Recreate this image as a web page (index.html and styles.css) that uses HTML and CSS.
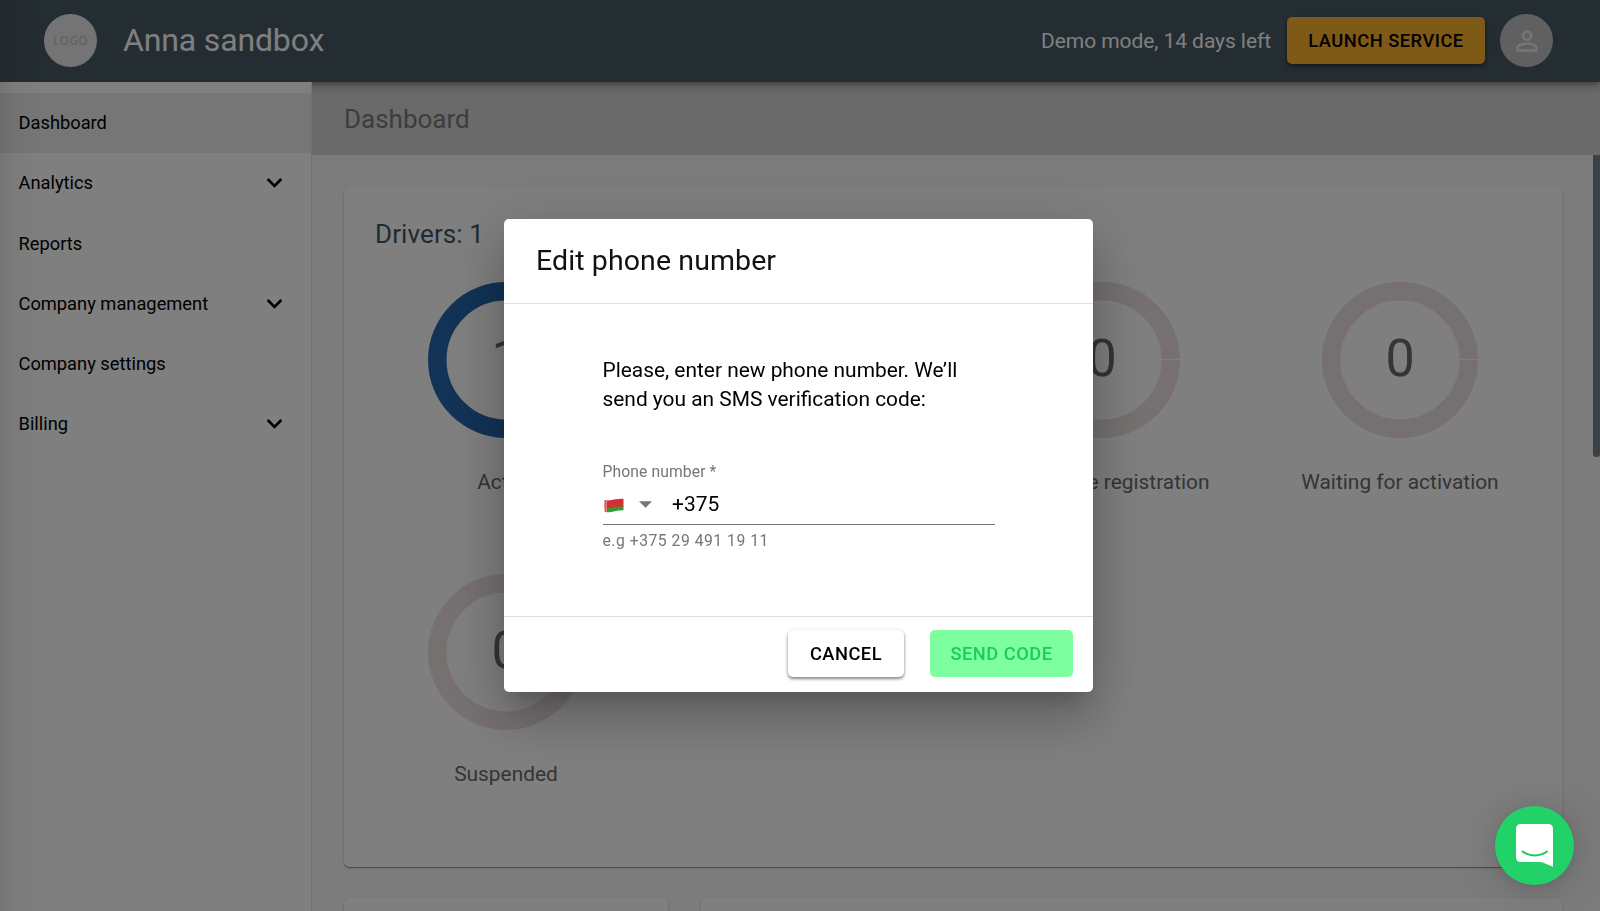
FILE: index.html
```html
<!DOCTYPE html>
<html lang="en">
<head>
    <meta charset="UTF-8">
    <meta name="viewport" content="width=device-width, initial-scale=1.0">
    <title>Anna sandbox - Dashboard</title>
    <link rel="stylesheet" href="styles.css">
</head>
<body>

    <div class="app">
        <header class="topbar">
            <div class="logo">LOGO</div>
            <h1>Anna sandbox</h1>
            <span class="demo-text">Demo mode, 14 days left</span>
            <button type="button" class="btn btn-launch">Launch service</button>
            <div class="avatar">
                <svg viewBox="0 0 24 24" width="32" height="32"><path d="M12 5.9a2.1 2.1 0 1 1 0 4.2 2.1 2.1 0 0 1 0-4.2m0 9c2.97 0 6.1 1.46 6.1 2.1v1.1H5.9V17c0-.64 3.13-2.1 6.1-2.1M12 4C9.79 4 8 5.79 8 8s1.79 4 4 4 4-1.79 4-4-1.79-4-4-4zm0 9c-2.67 0-8 1.34-8 4v3h16v-3c0-2.66-5.33-4-8-4z"/></svg>
            </div>
        </header>

        <div class="body-row">
            <nav class="sidebar">
                <a class="nav-item active">Dashboard</a>
                <a class="nav-item">Analytics
                    <svg class="chevron" viewBox="0 0 24 24"><path d="M7.41 8.59 12 13.17l4.59-4.58L18 10l-6 6-6-6z"/></svg>
                </a>
                <a class="nav-item">Reports</a>
                <a class="nav-item">Company management
                    <svg class="chevron" viewBox="0 0 24 24"><path d="M7.41 8.59 12 13.17l4.59-4.58L18 10l-6 6-6-6z"/></svg>
                </a>
                <a class="nav-item">Company settings</a>
                <a class="nav-item">Billing
                    <svg class="chevron" viewBox="0 0 24 24"><path d="M7.41 8.59 12 13.17l4.59-4.58L18 10l-6 6-6-6z"/></svg>
                </a>
            </nav>

            <main class="main">
                <div class="page-title">Dashboard</div>
                <div class="content">
                    <div class="cards">
                        <section class="card drivers">
                            <h2>Drivers: 1</h2>
                            <div class="charts">
                                <div class="chart">
                                    <div class="donut donut-blue">
                                        <svg viewBox="0 0 156 156"><circle cx="78" cy="78" r="68.7"/></svg>
                                        <span>1</span>
                                    </div>
                                    <p>Active</p>
                                </div>
                                <div class="chart">
                                    <div class="donut">
                                        <svg viewBox="0 0 156 156"><circle cx="78" cy="78" r="68.7"/></svg>
                                    </div>
                                </div>
                                <div class="chart">
                                    <div class="donut">
                                        <svg viewBox="0 0 156 156"><circle cx="78" cy="78" r="68.7"/><path d="M137 77.5h19"/></svg>
                                        <span>0</span>
                                    </div>
                                    <p>Incomplete registration</p>
                                </div>
                                <div class="chart">
                                    <div class="donut">
                                        <svg viewBox="0 0 156 156"><circle cx="78" cy="78" r="68.7"/><path d="M137 77.5h19"/></svg>
                                        <span>0</span>
                                    </div>
                                    <p>Waiting for activation</p>
                                </div>
                                <div class="chart">
                                    <div class="donut">
                                        <svg viewBox="0 0 156 156"><circle cx="78" cy="78" r="68.7"/><path d="M137 77.5h19"/></svg>
                                        <span>0</span>
                                    </div>
                                    <p>Suspended</p>
                                </div>
                            </div>
                        </section>
                        <div class="card-row">
                            <section class="card card-small"></section>
                            <section class="card card-wide"></section>
                        </div>
                    </div>
                    <div class="scrollbar"></div>
                </div>
            </main>
        </div>
    </div>

    <!-- Edit phone dialog -->
    <div class="overlay">
        <form class="modal">
            <div class="modal-header">Edit phone number</div>
            <div class="modal-body">
                <p class="modal-text">Please, enter new phone number. We’ll send you an SMS verification code:</p>
                <label for="phone">Phone number *</label>
                <div class="phone-row">
                    <svg class="flag" viewBox="0 0 20 15">
                        <path fill="#d22f36" d="M.5 2.2C6 3.4 12 .2 19.5 .8V9C12 8.6 7 11.5 .5 10.6z"/>
                        <path fill="#2f9e33" d="M3 9.8C8 10.5 13 8 19.5 8.6V12.4C13 12 7 15 3 14.2z"/>
                        <path fill="#e58a85" d="M.5 2.2 3 2.5V14.2L.5 13.9z"/>
                        <path stroke="#c4373b" stroke-width="1" stroke-dasharray="1.5 1" d="M1.7 2.5V14"/>
                    </svg>
                    <svg class="caret" viewBox="0 0 12 6"><path d="M0 0h12L6 6z"/></svg>
                    <input type="text" id="phone" value="+375">
                </div>
                <div class="helper">e.g +375 29 491 19 11</div>
            </div>
            <div class="modal-footer">
                <button type="button" class="btn btn-cancel">Cancel</button>
                <button type="button" class="btn btn-send">Send code</button>
            </div>
        </form>
    </div>

    <!-- Chat launcher -->
    <div class="chat">
        <svg viewBox="0 0 37 43" width="37" height="43">
            <path fill="#fff" d="M4.5 0h28A4.5 4.5 0 0 1 37 4.5V42.7L25.5 38H4.5A4.5 4.5 0 0 1 0 33.5v-29A4.5 4.5 0 0 1 4.5 0z"/>
            <path fill="none" stroke="#12cb5c" stroke-width="2" stroke-linecap="round" d="M6.5 27.5c7 5.2 17.5 5.2 24.5 0"/>
        </svg>
    </div>

</body>
</html>
```

FILE: styles.css
```css
* {
    box-sizing: border-box;
}

body {
    font-family: Roboto, sans-serif;
    margin: 0;
    height: 911px;
    overflow: hidden;
    background: #fff;
}

h1, h2, p {
    margin: 0;
    font-weight: 400;
}

.app {
    height: 911px;
    display: flex;
    flex-direction: column;
}

/* Top bar */
.topbar {
    height: 82px;
    flex-shrink: 0;
    display: flex;
    align-items: center;
    padding: 0 47px 1px 44px;
    background: #485a64;
    color: #fff;
    box-shadow: 0 3px 5px -1px rgba(0, 0, 0, 0.2), 0 5px 7px rgba(0, 0, 0, 0.14), 0 1px 13px rgba(0, 0, 0, 0.12);
    position: relative;
    z-index: 1;
}

.logo {
    width: 53px;
    height: 53px;
    border-radius: 50%;
    background: #e8e8e8;
    color: #c6c6c6;
    font-family: "Open Sans", sans-serif;
    font-size: 12px;
    font-weight: 600;
    letter-spacing: 0.2px;
    line-height: 53px;
    text-align: center;
}

.topbar h1 {
    margin-left: 26px;
    padding-bottom: 2px;
    font-size: 32px;
    letter-spacing: -0.15px;
}

.demo-text {
    margin-left: auto;
    margin-right: 16px;
    font-size: 21px;
    letter-spacing: -0.07px;
}

.btn {
    height: 47px;
    border: none;
    border-radius: 5px;
    padding: 0;
    font-family: inherit;
    font-size: 18.3px;
    font-weight: 500;
    letter-spacing: 0.5px;
    text-transform: uppercase;
}

.btn-launch {
    width: 198px;
    background: #ffb32c;
    color: #000;
    box-shadow: 0 2px 4px rgba(0, 0, 0, 0.45);
}

.avatar {
    width: 53px;
    height: 53px;
    margin-left: 15px;
    border-radius: 50%;
    background: #c1c1c1;
    display: flex;
    align-items: center;
    justify-content: center;
}

.avatar svg {
    fill: #ececec;
}

/* Sidebar */
.body-row {
    flex: 1;
    min-height: 0;
    display: flex;
}

.sidebar {
    width: 312px;
    flex-shrink: 0;
    padding-top: 11px;
    background: #fff;
    border-right: 1px solid #e4e4e4;
    position: relative;
    z-index: 2;
}

.nav-item {
    height: 60.2px;
    display: flex;
    align-items: center;
    justify-content: space-between;
    padding: 0 21px 0.6px 18.5px;
    font-size: 18.3px;
    color: #000;
}

.nav-item.active {
    background: #ececec;
}

.chevron {
    width: 31px;
    height: 31px;
}

/* Main area */
.main {
    flex: 1;
    display: flex;
    flex-direction: column;
    background: #f8f8f8;
}

.page-title {
    height: 73px;
    flex-shrink: 0;
    padding-left: 32px;
    background: #d4d4d4;
    color: #7b7b7b;
    font-size: 26px;
    line-height: 74px;
}

.content {
    flex: 1;
    min-height: 0;
    display: flex;
    justify-content: space-between;
    overflow: hidden;
}

.cards {
    width: 1218px;
    margin: 32px 0 0 32px;
}

.card {
    background: #fff;
    border-radius: 5px;
    box-shadow: 0 1px 1px rgba(0, 0, 0, 0.35), 0 1px 3px rgba(0, 0, 0, 0.12);
}

.drivers {
    height: 680px;
    padding: 32px 13px 0;
}

.drivers h2 {
    padding-left: 18px;
    font-size: 26px;
    line-height: 30px;
    letter-spacing: 0.1px;
    color: #3c5864;
}

.charts {
    margin-top: 32.5px;
    display: grid;
    grid-template-columns: repeat(4, 298px);
    grid-auto-rows: 292.5px;
}

.chart {
    text-align: center;
}

.donut {
    width: 156px;
    height: 156px;
    margin: 0 auto;
    display: grid;
    place-items: center;
}

.donut svg,
.donut span {
    grid-area: 1 / 1;
}

.donut circle {
    fill: none;
    stroke: #ece2e1;
    stroke-width: 18.5;
}

.donut path {
    stroke: #fff;
    stroke-width: 1;
}

.donut-blue circle {
    stroke: #2466ac;
}

.donut span {
    font-size: 52px;
    line-height: 60px;
    color: #6a6a6a;
    margin-top: -2px;
}

.chart p {
    margin-top: 32px;
    font-size: 20.9px;
    line-height: 25px;
    color: #6a6a6a;
}

.card-row {
    display: flex;
    gap: 33px;
    margin-top: 31px;
}

.card-small {
    width: 324px;
    height: 300px;
}

.card-wide {
    flex: 1;
    height: 300px;
}

.scrollbar {
    width: 7px;
    height: 302px;
    background: #76858c;
    border-radius: 0 0 3px 3px;
}

/* Dialog */
.overlay {
    position: fixed;
    inset: 0;
    z-index: 10;
    display: flex;
    align-items: center;
    justify-content: center;
    padding-right: 3px;
    background: linear-gradient(to right, rgba(0, 0, 0, 0.08), rgba(0, 0, 0, 0.03) 16px, rgba(0, 0, 0, 0) 40px), rgba(0, 0, 0, 0.5);
}

.modal {
    width: 589px;
    height: 473px;
    display: flex;
    flex-direction: column;
    background: #fff;
    border-radius: 5px;
    box-shadow: 0 14px 20px -9px rgba(0, 0, 0, 0.2), 0 31px 50px 4px rgba(0, 0, 0, 0.14), 0 12px 60px 10px rgba(0, 0, 0, 0.12);
}

.modal-header {
    height: 85px;
    padding: 0 32px;
    border-bottom: 1px solid #e0e0e0;
    font-size: 28.5px;
    line-height: 83px;
    letter-spacing: 0.1px;
    color: #111;
}

.modal-body {
    flex: 1;
    padding: 52px 98.5px 0;
    display: flex;
    flex-direction: column;
}

.modal-text {
    font-size: 20.9px;
    line-height: 29px;
}

.modal-body label {
    margin-top: 48px;
    font-size: 15.7px;
    line-height: 20px;
    letter-spacing: 0.1px;
    color: #757575;
}

.phone-row {
    height: 43px;
    display: flex;
    align-items: center;
    border-bottom: 1px solid #777;
}

.flag {
    width: 20px;
    height: 15px;
    margin: 4px 15px 0 1px;
    fill: none;
}

.caret {
    width: 13px;
    height: 7px;
    margin: 3px 20.5px 0 0;
    fill: #757575;
}

.phone-row input {
    flex: 1;
    min-width: 0;
    padding: 1px 0 0;
    border: none;
    outline: none;
    background: none;
    font-family: inherit;
    font-size: 21px;
    color: #000;
}

.helper {
    margin-top: 6px;
    font-size: 15.7px;
    line-height: 20px;
    letter-spacing: 0.52px;
    color: #757575;
}

.modal-footer {
    height: 76px;
    display: flex;
    justify-content: flex-end;
    align-items: center;
    gap: 26px;
    padding: 0 20px 2px 0;
    border-top: 1px solid #ddd;
}

.btn-cancel {
    width: 116px;
    background: #fff;
    color: #000;
    box-shadow: 0 2px 3px rgba(0, 0, 0, 0.4), 0 1px 5px rgba(0, 0, 0, 0.15);
}

.btn-send {
    width: 143px;
    background: #7dffa0;
    color: #1bcb62;
}

.chat {
    position: fixed;
    right: 26px;
    bottom: 26px;
    z-index: 20;
    width: 79px;
    height: 79px;
    border-radius: 50%;
    background: #22d268;
    display: flex;
    align-items: center;
    justify-content: center;
    box-shadow: 0 2px 8px rgba(0, 0, 0, 0.08), 0 3px 42px rgba(0, 0, 0, 0.2);
}
```
